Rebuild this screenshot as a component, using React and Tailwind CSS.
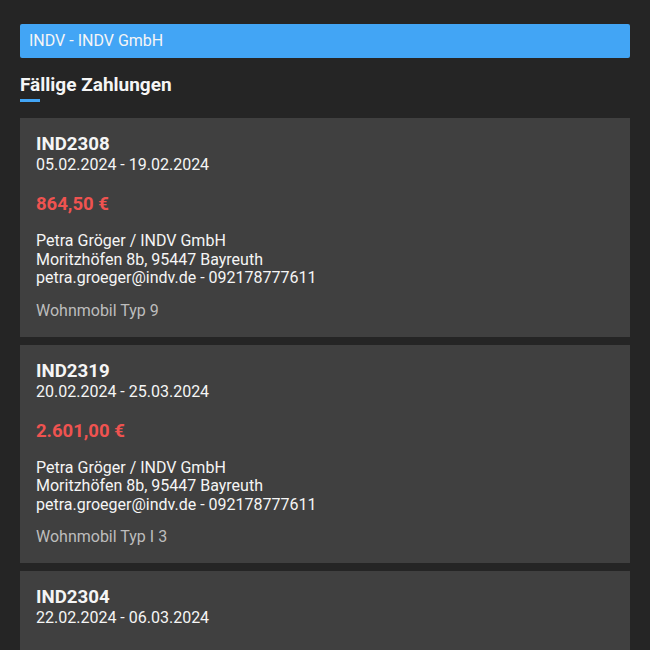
const payments = [
  {
    id: 'IND2308',
    period: '05.02.2024 - 19.02.2024',
    amount: '864,50 €',
    contact: 'Petra Gröger / INDV GmbH',
    address: 'Moritzhöfen 8b, 95447 Bayreuth',
    reach: 'petra.groeger@indv.de - 092178777611',
    vehicle: 'Wohnmobil Typ 9',
  },
  {
    id: 'IND2319',
    period: '20.02.2024 - 25.03.2024',
    amount: '2.601,00 €',
    contact: 'Petra Gröger / INDV GmbH',
    address: 'Moritzhöfen 8b, 95447 Bayreuth',
    reach: 'petra.groeger@indv.de - 092178777611',
    vehicle: 'Wohnmobil Typ I 3',
  },
  {
    id: 'IND2304',
    period: '22.02.2024 - 06.03.2024',
    amount: '1.120,00 €',
    contact: 'Petra Gröger / INDV GmbH',
    address: 'Moritzhöfen 8b, 95447 Bayreuth',
    reach: 'petra.groeger@indv.de - 092178777611',
    vehicle: 'Wohnmobil Typ 5',
  },
];

export default function App() {
  return (
    <div className="bg-[#252525] min-h-screen px-5 pt-6 pb-6 text-white font-['Roboto',sans-serif]">
      {/* Company bar */}
      <div className="bg-[#42a5f5] rounded-[2px] h-[34px] flex items-center px-[9px] text-[16px] text-[#f5f5f5]">
        INDV - INDV GmbH
      </div>

      {/* Section heading */}
      <div className="mt-[16px] mb-[16px]">
        <h2 className="text-[19px] font-bold leading-[22px] text-[#f5f5f5]">Fällige Zahlungen</h2>
        <div className="mt-[3px] w-5 h-[3px] bg-[#42a5f5]"></div>
      </div>

      {/* Payment cards */}
      <div className="flex flex-col gap-2">
        {payments.map((p) => (
          <div key={p.id} className="bg-[#404040] px-4 pt-4 pb-4">
            <h3 className="text-[18.7px] font-bold leading-[20px] text-[#f5f5f5]">{p.id}</h3>
            <p className="text-[16px] leading-[21px] text-[#f5f5f5]">{p.period}</p>
            <p className="mt-[17px] text-[18.5px] font-bold leading-[24px] text-[#ef5350]">{p.amount}</p>
            <div className="mt-[16px] text-[16px] leading-[18.5px] text-[#f5f5f5]">
              <p>{p.contact}</p>
              <p>{p.address}</p>
              <p>{p.reach}</p>
            </div>
            <p className="mt-[13px] text-[16px] leading-[20px] text-[#bdbdbd]">{p.vehicle}</p>
          </div>
        ))}
      </div>
    </div>
  );
}
